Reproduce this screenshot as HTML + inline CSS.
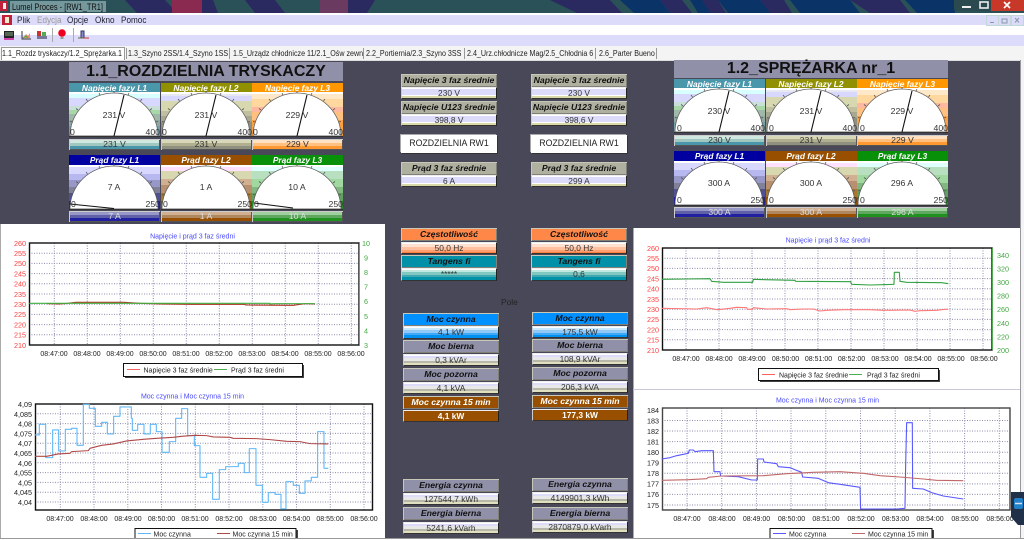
<!DOCTYPE html>
<html lang="pl"><head><meta charset="utf-8"><title>Lumel Proces</title>
<style>
html,body{margin:0;padding:0;background:#fff}
#r{position:relative;width:1024px;height:540px;overflow:hidden;font-family:"Liberation Sans",sans-serif;background:#484858;filter:blur(.35px)}
#r div,#r svg{position:absolute}
.t{left:0;top:0;width:100%;height:100%}
.m{font-size:9.5px;color:#223;top:15px;line-height:11px;transform:scaleX(.86);transform-origin:0 0}
.tab{font-size:8px;color:#222;top:47px;line-height:13px;white-space:nowrap;transform:scaleX(.89);transform-origin:0 0}
.sep{top:48px;width:1px;height:11px;background:#999}
.h,.v{width:96px;text-align:center;white-space:nowrap;box-sizing:border-box}
.h{height:13px;line-height:13px;font:italic bold 8.7px/13px "Liberation Sans",sans-serif;color:#111;background:#b0b0a0;box-shadow:inset 1px 1px 0 #c8c8b8,inset -1px -1px 0 #808078}
.v{height:12px;line-height:12px;font-size:8.4px;color:#333;border-left:1px solid #ccc;border-top:1px solid #eee;border-right:1px solid #222;border-bottom:1px solid #333;line-height:10px}
.vn{background:linear-gradient(#fff 0 1px,#dcdcfa 1px 7px,#fff 7px 8px,#d8d8a8 8px)}
.vg{background:linear-gradient(#fff 0 1px,#dcdcfa 1px 3px,#e8e8e8 3px 6px,#b8b8a8 6px 8px,#e0e0c0 8px)}
.vb{background:linear-gradient(#fff 0 1px,#c8e8ff 1px 3px,#90c8f8 3px 6px,#40a8f8 6px 8px,#0090f0 8px)}
.vo{background:linear-gradient(#fff 0 1px,#ffe0d0 1px 4px,#ffc0a0 4px 7px,#ffa070 7px 9px,#ff8040 9px)}
.vt{background:linear-gradient(#fff 0 1px,#c0e8e0 1px 3px,#80c8c0 3px 6px,#40a8b0 6px 8px,#0090a8 8px)}
.hg{background:#9090a8}.ho{background:#ff8848}.ht{background:#0090a8}.hb{background:#0090ff}.hr{background:#985000;color:#fff}
.vr{background:#985000;color:#fff;font-weight:bold}
.w{background:#fff;height:18px;line-height:17px;font-size:8.8px;color:#222;width:96px;text-align:center;box-shadow:1px 1px 0 #333,-1px -1px 0 #aaa}
.T{background:#9090a8;text-align:center;font-weight:bold;color:#111;font-size:16px;height:19px;line-height:19px;width:274px}
.gh{width:91px;height:10px;line-height:10px;font:italic bold 8.4px/10px "Liberation Sans",sans-serif;color:#fff;text-align:center}
.gv{width:91px;height:11px;line-height:11px;font-size:8.7px;color:#333;text-align:center;box-shadow:inset 1px 1px 0 #ccc,inset -1px -1px 0 #555}
.gi{color:#ddd}
.g{width:91px;height:45px}
.g1{background:linear-gradient(#fff 0 2px,#d8ffff 2px 6px,#d8d8ff 6px 14px,#c8e0d8 14px 18px,#a8d8a8 18px 22px,#a0b8a8 22px 28px,#90a8a0 28px 34px,#70a0a8 34px)}
.g2{background:linear-gradient(#fff 0 2px,#e8e8f0 2px 4px,#d8d8ff 4px 9px,#d8d8b0 9px 19px,#c0c0a0 19px 24px,#a8a890 24px 30px,#909080 30px)}
.g3{background:linear-gradient(#fff 0 2px,#ffe8c8 2px 7px,#ffd8a0 7px 15px,#ffb8a0 15px 20px,#ffc080 20px 28px,#ffa040 28px)}
.g4{background:linear-gradient(#fff 0 2px,#d8d8ff 2px 9px,#b8b8f0 9px 15px,#9898c8 15px 22px,#808098 22px 28px,#505098 28px 36px,#2020a0 36px)}
.g5{background:linear-gradient(#fff 0 2px,#ffe0ff 2px 6px,#d8d8b0 6px 14px,#d0b090 14px 20px,#b89070 20px 28px,#a87830 28px 36px,#985000 36px)}
.g6{background:linear-gradient(#fff 0 2px,#e0ffff 2px 6px,#b8e0c0 6px 14px,#a0d8a0 14px 22px,#80b880 22px 28px,#60a060 28px 36px,#209020 36px)}
.b1{background:linear-gradient(#e8e8f0 0 1px,#d0e8e0 1px 4px,#a0c8c0 4px 7px,#4a96aa 7px)}
.b2{background:linear-gradient(#e8e8f0 0 1px,#d8d8b8 1px 4px,#b0b090 4px 7px,#909080 7px)}
.b3{background:linear-gradient(#fff 0 1px,#ffe0c0 1px 4px,#ffc080 4px 7px,#ff9830 7px)}
.b4{background:linear-gradient(#d8d8f0 0 1px,#9898c8 1px 4px,#6060a8 4px 7px,#2020a0 7px)}
.b5{background:linear-gradient(#f0e8e0 0 1px,#d0b090 1px 4px,#b08860 4px 7px,#985000 7px)}
.b6{background:linear-gradient(#e8f0e8 0 1px,#a0d0a0 1px 4px,#60a860 4px 7px,#209020 7px)}
text{font-family:"Liberation Sans",sans-serif}
.gt{font-size:8.7px;fill:#333}
.ct{font-size:7px;fill:#4a4aff;text-anchor:middle}
.tm{font-size:7px;fill:#222;text-anchor:middle}
.yr{font-size:7.2px;fill:#ff4040;text-anchor:end}
.yk{font-size:7.2px;fill:#222;text-anchor:end}
.yg{font-size:7.2px;fill:#40a840}
.lg{font-size:7px;fill:#222}
.gr{fill:none;stroke:#8c8cac;stroke-width:1;stroke-dasharray:1 1.5}
.px{fill:none;stroke:#111;stroke-width:1.4}
.ln{fill:none;stroke-width:3.3;stroke-linejoin:round}
</style></head><body><div id="r">

<!-- title bar -->
<svg class="t" style="width:1024px;height:13px" viewBox="0 0 1024 13">
<rect width="1024" height="13" fill="#2a5058"/>
<path d="M125 0h40l12 13h-40zM195 0h18l5 13h-16zM245 0h30l10 13h-30zM345 0h30l-8 13h-30zM550 0h60l12 13h-45zM660 0h22l10 13h-22zM700 0h18l8 13h-20zM760 0h24l8 13h-24zM850 0h50l10 13h-40z" fill="#2a2a60"/>
<path d="M620 0h40l10 13h-36zM690 0h12l8 13h-12zM718 0h42l10 13h-42zM790 0h60l10 13h-60zM905 0h50v13h-38z" fill="#0a3468"/>
<rect x="172" y="0" width="30" height="13" fill="#8a2a50"/><rect x="320" y="0" width="28" height="13" fill="#6a3a60"/>
<rect x="10" y="1" width="96" height="11" fill="#8fb0b4" opacity=".75"/>
<path d="M954 0h37v8q-1 3-3 3h-32q-2 0-2-3z" fill="#2a4a50"/><path d="M991 0h33v11h-33z" fill="#c83828"/>
<rect x="962" y="6" width="9" height="2" fill="#eee"/><rect x="980" y="2" width="8" height="6" fill="none" stroke="#eee" stroke-width="1.6"/>
<path d="M1004 2l6 6M1010 2l-6 6" stroke="#fff" stroke-width="1.7"/>
<rect x="0" y="1" width="8" height="10" fill="#c02038"/><rect x="3" y="3" width="3" height="6" fill="#eee"/>
<text x="12" y="10" font-size="9.2" fill="#111" textLength="91" lengthAdjust="spacingAndGlyphs">Lumel Proces - [RW1_TR1]</text>
</svg>
<div style="left:0;top:13px;width:1024px;height:2px;background:#fff"></div>
<div style="left:0;top:15px;width:1024px;height:10px;background:#dcdcfa"></div>
<div style="left:0;top:25px;width:1024px;height:10px;background:#fff"></div>
<div style="left:0;top:35px;width:1024px;height:11px;background:#dcdcfa"></div>
<div style="left:0;top:46px;width:1024px;height:14px;background:#f4f4f4"></div>

<!-- menu -->
<div style="left:2px;top:15px;width:10px;height:10px;background:#c02038"></div>
<div style="left:5px;top:17px;width:4px;height:6px;background:#eec"></div>
<div class="m" style="left:17px">Plik</div>
<div class="m" style="left:37px;color:#999">Edycja</div>
<div class="m" style="left:67px">Opcje</div>
<div class="m" style="left:95px">Okno</div>
<div class="m" style="left:121px">Pomoc</div>
<svg class="t" style="width:1024px;height:46px" viewBox="0 0 1024 46">
<g fill="#dcdcfa" stroke="#c0d8d8"><rect x="986.500" y="15.500" width="12" height="10"/><rect x="998.500" y="15.500" width="12" height="10"/><rect x="1011.500" y="15.500" width="12" height="10"/></g>
<path d="M990 22.500h4" stroke="#8899aa"/><path d="M1002 19h5v4h-5z" fill="none" stroke="#8899aa"/><path d="M1015 18l4 4.500M1019 18l-4 4.500" stroke="#8899aa"/>
<!-- toolbar icons -->
<rect x="4" y="31" width="10" height="8" fill="#222"/><path d="M5 33h8M5 35h8" stroke="#8a8"/><rect x="4" y="38" width="10" height="2" fill="#c4a"/>
<path d="M22 31v8h9" stroke="#333" fill="none"/><path d="M23 38l3-4 2 2 2-3v5z" fill="#e86"/><path d="M23 38l3-2 2 2" stroke="#4a4" fill="none"/>
<rect x="37" y="31" width="4" height="5" fill="#c33"/><rect x="42" y="32" width="4" height="4" fill="#5a5"/><rect x="37" y="36" width="10" height="3" fill="#779"/>
<line x1="52.500" y1="28" x2="52.500" y2="42" stroke="#aaa"/>
<circle cx="62" cy="33" r="3.800" fill="#f00020"/><rect x="60.500" y="37" width="3" height="2" fill="#999"/>
<line x1="73.500" y1="28" x2="73.500" y2="42" stroke="#aaa"/>
<path d="M81 38v-7h3v7" fill="#88c" stroke="#336"/><path d="M78 38h11" stroke="#664"/><path d="M84 38h5" stroke="#c33"/>
</svg>

<!-- tabs -->
<div style="left:1px;top:47px;width:124px;height:13px;background:#fff;border:1px solid #999;border-bottom:0;box-sizing:border-box"></div>
<div class="tab" style="left:2px">1.1_Rozdz tryskaczy/1.2_Sprężarka.1</div>
<div class="sep" style="left:126px"></div>
<div class="tab" style="left:128px">1.3_Szyno 2SS/1.4_Szyno 1SS</div>
<div class="sep" style="left:229px"></div>
<div class="tab" style="left:233px">1.5_Urządz chłodnicze 11/2.1_Ośw zewn</div>
<div class="sep" style="left:363px"></div>
<div class="tab" style="left:366px">2.2_Portiernia/2.3_Szyno 3SS</div>
<div class="sep" style="left:464px"></div>
<div class="tab" style="left:467px">2.4_Urz.chłodnicze Mag/2.5_Chłodnia 6</div>
<div class="sep" style="left:595px"></div>
<div class="tab" style="left:599px">2.6_Parter Bueno</div>
<div class="sep" style="left:656px"></div>
<div style="left:0;top:60px;width:1024px;height:1px;background:#ddd"></div>
<div style="left:1020px;top:60px;width:4px;height:480px;background:#f4f4f8;border-left:1px solid #999;box-sizing:border-box"></div>

<!-- dome symbols -->
<svg style="width:0;height:0"><defs>
<g id="d"><path d="M1 44A44 43 0 0 1 89 44Z" fill="#fff" stroke="#555" stroke-width=".7"/><path d="M0 44.500H91" stroke="#333" stroke-width="1.200"/>
<path d="M45 1v-2M31 3l-1-2M18.500 9l-1.500-2M9 18l-2-1.500M3 30l-2-.6M59 3l1-2M71.500 9l1.500-2M81 18l2-1.500M87 30l2-.6" stroke="#555" stroke-width=".8"/></g>
</defs></svg>

<!-- LEFT gauges -->
<div class="T" style="left:69px;top:62px">1.1_ROZDZIELNIA TRYSKACZY</div>
<div class="gh" style="left:69px;top:83px;background:#4a96aa">Napięcie fazy L1</div>
<div class="gh" style="left:160.500px;top:83px;background:#909000">Napięcie fazy L2</div>
<div class="gh" style="left:252px;top:83px;background:#ff9800">Napięcie fazy L3</div>
<div class="g g1" style="left:69px;top:92px"></div><div class="g g2" style="left:160.500px;top:92px"></div><div class="g g3" style="left:252px;top:92px"></div>
<svg style="left:69px;top:92px;width:91px;height:45px;overflow:visible" viewBox="0 0 91 45"><use href="#d"/><path d="M45 44L55 3" stroke="#111" stroke-width="1.100"/><text class="gt" x="45" y="26" text-anchor="middle">231 V</text><text class="gt" x="1" y="43">0</text><text class="gt" x="91" y="43" text-anchor="end">400</text></svg>
<svg style="left:160.500px;top:92px;width:91px;height:45px;overflow:visible" viewBox="0 0 91 45"><use href="#d"/><path d="M45 44L55 3" stroke="#111" stroke-width="1.100"/><text class="gt" x="45" y="26" text-anchor="middle">231 V</text><text class="gt" x="1" y="43">0</text><text class="gt" x="91" y="43" text-anchor="end">400</text></svg>
<svg style="left:252px;top:92px;width:91px;height:45px;overflow:visible" viewBox="0 0 91 45"><use href="#d"/><path d="M45 44L55 3" stroke="#111" stroke-width="1.100"/><text class="gt" x="45" y="26" text-anchor="middle">229 V</text><text class="gt" x="1" y="43">0</text><text class="gt" x="91" y="43" text-anchor="end">400</text></svg>
<div class="gv b1" style="left:69px;top:139px">231 V</div><div class="gv b2" style="left:160.500px;top:139px">231 V</div><div class="gv b3" style="left:252px;top:139px">229 V</div>

<div class="gh" style="left:69px;top:155px;background:#0000a0">Prąd fazy L1</div>
<div class="gh" style="left:160.500px;top:155px;background:#985000">Prąd fazy L2</div>
<div class="gh" style="left:252px;top:155px;background:#089008">Prąd fazy L3</div>
<div class="g g4" style="left:69px;top:165px"></div><div class="g g5" style="left:160.500px;top:165px"></div><div class="g g6" style="left:252px;top:165px"></div>
<svg style="left:69px;top:165px;width:91px;height:45px;overflow:visible" viewBox="0 0 91 45"><use href="#d"/><path d="M45 43.500L1 39" stroke="#111" stroke-width="1.100"/><text class="gt" x="45" y="25" text-anchor="middle">7 A</text><text class="gt" x="2" y="42">0</text><text class="gt" x="91" y="42" text-anchor="end">250</text></svg>
<svg style="left:160.500px;top:165px;width:91px;height:45px;overflow:visible" viewBox="0 0 91 45"><use href="#d"/><text class="gt" x="45" y="25" text-anchor="middle">1 A</text><text class="gt" x="2" y="42">0</text><text class="gt" x="91" y="42" text-anchor="end">250</text></svg>
<svg style="left:252px;top:165px;width:91px;height:45px;overflow:visible" viewBox="0 0 91 45"><use href="#d"/><path d="M41 43L2 38" stroke="#111" stroke-width="1.100"/><text class="gt" x="45" y="25" text-anchor="middle">10 A</text><text class="gt" x="2" y="42">0</text><text class="gt" x="91" y="42" text-anchor="end">250</text></svg>
<div class="gv gi b4" style="left:69px;top:211px">7 A</div><div class="gv gi b5" style="left:160.500px;top:211px">1 A</div><div class="gv gi b6" style="left:252px;top:211px">10 A</div>

<!-- RIGHT gauges -->
<div class="T" style="left:674px;top:60px;height:18px;line-height:18px">1.2_SPRĘŻARKA nr_1</div>
<div class="gh" style="left:674px;top:79px;background:#4a96aa">Napięcie fazy L1</div>
<div class="gh" style="left:765.500px;top:79px;background:#909000">Napięcie fazy L2</div>
<div class="gh" style="left:857px;top:79px;background:#ff9800">Napięcie fazy L3</div>
<div class="g g1" style="left:674px;top:88px"></div><div class="g g2" style="left:765.500px;top:88px"></div><div class="g g3" style="left:857px;top:88px"></div>
<svg style="left:674px;top:88px;width:91px;height:45px;overflow:visible" viewBox="0 0 91 45"><use href="#d"/><path d="M45 44L55 3" stroke="#111" stroke-width="1.100"/><text class="gt" x="45" y="26" text-anchor="middle">230 V</text><text class="gt" x="3" y="43">0</text><text class="gt" x="91" y="43" text-anchor="end">400</text></svg>
<svg style="left:765.500px;top:88px;width:91px;height:45px;overflow:visible" viewBox="0 0 91 45"><use href="#d"/><path d="M45 44L55 3" stroke="#111" stroke-width="1.100"/><text class="gt" x="45" y="26" text-anchor="middle">231 V</text><text class="gt" x="3" y="43">0</text><text class="gt" x="91" y="43" text-anchor="end">400</text></svg>
<svg style="left:857px;top:88px;width:91px;height:45px;overflow:visible" viewBox="0 0 91 45"><use href="#d"/><path d="M45 44L55 3" stroke="#111" stroke-width="1.100"/><text class="gt" x="45" y="26" text-anchor="middle">229 V</text><text class="gt" x="3" y="43">0</text><text class="gt" x="91" y="43" text-anchor="end">400</text></svg>
<div class="gv b1" style="left:674px;top:134.500px">230 V</div><div class="gv b2" style="left:765.500px;top:134.500px">231 V</div><div class="gv b3" style="left:857px;top:134.500px">229 V</div>

<div class="gh" style="left:674px;top:151px;background:#0000a0">Prąd fazy L1</div>
<div class="gh" style="left:765.500px;top:151px;background:#985000">Prąd fazy L2</div>
<div class="gh" style="left:857px;top:151px;background:#089008">Prąd fazy L3</div>
<div class="g g4" style="left:674px;top:161px"></div><div class="g g5" style="left:765.500px;top:161px"></div><div class="g g6" style="left:857px;top:161px"></div>
<svg style="left:674px;top:161px;width:91px;height:45px;overflow:visible" viewBox="0 0 91 45"><use href="#d"/><text class="gt" x="45" y="25" text-anchor="middle">300 A</text><text class="gt" x="3" y="42">0</text><text class="gt" x="91" y="42" text-anchor="end">250</text></svg>
<svg style="left:765.500px;top:161px;width:91px;height:45px;overflow:visible" viewBox="0 0 91 45"><use href="#d"/><text class="gt" x="45" y="25" text-anchor="middle">300 A</text><text class="gt" x="3" y="42">0</text><text class="gt" x="91" y="42" text-anchor="end">250</text></svg>
<svg style="left:857px;top:161px;width:91px;height:45px;overflow:visible" viewBox="0 0 91 45"><use href="#d"/><text class="gt" x="45" y="25" text-anchor="middle">296 A</text><text class="gt" x="3" y="42">0</text><text class="gt" x="91" y="42" text-anchor="end">250</text></svg>
<div class="gv gi b4" style="left:674px;top:206.500px">300 A</div><div class="gv gi b5" style="left:765.500px;top:206.500px">300 A</div><div class="gv gi b6" style="left:857px;top:206.500px">296 A</div>

<!-- CENTER column 1 -->
<div class="h" style="left:401px;top:74px">Napięcie 3 faz średnie</div><div class="v vn" style="left:401px;top:87px">230 V</div>
<div class="h" style="left:401px;top:101px">Napięcie U123 średnie</div><div class="v vn" style="left:401px;top:114px">398,8 V</div>
<div class="w" style="left:401px;top:135px">ROZDZIELNIA RW1</div>
<div class="h" style="left:401px;top:162px">Prąd 3 faz średnie</div><div class="v vn" style="left:401px;top:175px">6 A</div>
<div class="h ho" style="left:401px;top:228px">Częstotliwość</div><div class="v vo" style="left:401px;top:242px">50,0 Hz</div>
<div class="h ht" style="left:401px;top:255px">Tangens fi</div><div class="v vt" style="left:401px;top:268px;height:13px">*****</div>
<!-- CENTER column 2 -->
<div class="h" style="left:531px;top:73.500px">Napięcie 3 faz średnie</div><div class="v vn" style="left:531px;top:86.500px">230 V</div>
<div class="h" style="left:531px;top:100.500px">Napięcie U123 średnie</div><div class="v vn" style="left:531px;top:113.500px">398,6 V</div>
<div class="w" style="left:531px;top:135px">ROZDZIELNIA RW1</div>
<div class="h" style="left:531px;top:161.500px">Prąd 3 faz średnie</div><div class="v vn" style="left:531px;top:174.500px">299 A</div>
<div class="h ho" style="left:531px;top:227.500px">Częstotliwość</div><div class="v vo" style="left:531px;top:241.500px">50,0 Hz</div>
<div class="h ht" style="left:531px;top:254.500px">Tangens fi</div><div class="v vt" style="left:531px;top:268px;height:13px">0,6</div>

<div style="left:501px;top:297px;font-size:8.4px;color:#222;line-height:10px">Pole</div>

<!-- Moc column 1 -->
<div class="h hb" style="left:403px;top:313px">Moc czynna</div><div class="v vb" style="left:403px;top:326px;height:13px">4,1 kW</div>
<div class="h hg" style="left:403px;top:340px">Moc bierna</div><div class="v vg" style="left:403px;top:354px">0,3 kVAr</div>
<div class="h hg" style="left:403px;top:368px">Moc pozorna</div><div class="v vg" style="left:403px;top:382px">4,1 kVA</div>
<div class="h hr" style="left:403px;top:396px">Moc czynna 15 min</div><div class="v vr" style="left:403px;top:410px">4,1 kW</div>
<div class="h hg" style="left:403px;top:479px">Energia czynna</div><div class="v vg" style="left:403px;top:493px">127544,7 kWh</div>
<div class="h hg" style="left:403px;top:507px">Energia bierna</div><div class="v vg" style="left:403px;top:522px">5241,6 kVarh</div>
<!-- Moc column 2 -->
<div class="h hb" style="left:532px;top:312px">Moc czynna</div><div class="v vb" style="left:532px;top:326px">175,5 kW</div>
<div class="h hg" style="left:532px;top:339px">Moc bierna</div><div class="v vg" style="left:532px;top:353px">108,9 kVAr</div>
<div class="h hg" style="left:532px;top:367px">Moc pozorna</div><div class="v vg" style="left:532px;top:381px">206,3 kVA</div>
<div class="h hr" style="left:532px;top:395px">Moc czynna 15 min</div><div class="v vr" style="left:532px;top:409px">177,3 kW</div>
<div class="h hg" style="left:532px;top:478px">Energia czynna</div><div class="v vg" style="left:532px;top:492px">4149901,3 kWh</div>
<div class="h hg" style="left:532px;top:507px">Energia bierna</div><div class="v vg" style="left:532px;top:521px">2870879,0 kVarh</div>

<!-- chart panels -->
<div style="left:0;top:224px;width:385px;height:316px;background:#fff;border-left:1px solid #aaa;box-sizing:border-box"></div>
<div style="left:633px;top:228px;width:387px;height:312px;background:#fff;border-left:1px solid #aab;box-sizing:border-box"></div>
<div style="left:0;top:538px;width:1024px;height:2px;background:#fff;border-top:1px solid #999;box-sizing:border-box"></div>
<div style="left:633px;top:389px;width:387px;height:1px;background:#c8c8d8"></div>

<svg class="t" viewBox="0 0 1024 540">
<!-- CHART 1 -->
<text class="ct" x="192.500" y="238.500">Napięcie i prąd 3 faz średni</text>
<path class="gr" d="M29 253.200H359M29 263.400H359M29 273.600H359M29 283.800H359M29 294H359M29 304.200H359M29 314.400H359M29 324.600H359M29 334.800H359M54.300 243V345M87.300 243V345M120.300 243V345M153.300 243V345M186.300 243V345M219.300 243V345M252.300 243V345M285.300 243V345M318.300 243V345M351.300 243V345"/>
<rect class="px" x="29.500" y="243" width="329.500" height="102"/>
<path d="M359.500 243V345" stroke="#50b050" stroke-width="1"/>
<g transform="scale(.3333) translate(0,675)">
<polyline class="ln" stroke="#b03020" points="140,236 175,237 195,236 228,232 265,232 316,232 372,232 420,235 480,237 575,238 735,238 737,240 880,241 915,236 945,237"/>
<polyline class="ln" stroke="#40b040" points="88,235 810,235 810,237 825,236 945,236"/>
</g>
<g class="yr"><text x="26" y="246">260</text><text x="26" y="256">255</text><text x="26" y="266">250</text><text x="26" y="276.500">245</text><text x="26" y="286.500">240</text><text x="26" y="297">235</text><text x="26" y="307">230</text><text x="26" y="317">225</text><text x="26" y="327.500">220</text><text x="26" y="337.500">215</text><text x="26" y="348">210</text></g>
<g class="yg"><text x="362" y="246">10</text><text x="364" y="260.500">9</text><text x="364" y="275">8</text><text x="364" y="289.500">7</text><text x="364" y="304">6</text><text x="364" y="319">5</text><text x="364" y="333.500">4</text><text x="364" y="348">3</text></g>
<g class="tm"><text x="54" y="356">08:47:00</text><text x="87" y="356">08:48:00</text><text x="120" y="356">08:49:00</text><text x="153" y="356">08:50:00</text><text x="186" y="356">08:51:00</text><text x="219" y="356">08:52:00</text><text x="252" y="356">08:53:00</text><text x="285" y="356">08:54:00</text><text x="318" y="356">08:55:00</text><text x="351" y="356">08:56:00</text></g>
<rect x="125" y="365" width="179" height="13" fill="#444"/><rect x="123.500" y="363.500" width="179" height="13" fill="#fff" stroke="#111"/>
<path d="M127 369.500h13" stroke="#ff6060"/><path d="M214 369.500h13" stroke="#50b050"/>
<text class="lg" x="143.500" y="372.500">Napięcie 3 faz średnie</text><text class="lg" x="231" y="372.500">Prąd 3 faz średni</text>

<!-- CHART 2 -->
<text class="ct" x="192.500" y="398.500">Moc czynna i Moc czynna 15 min</text>
<path class="gr" d="M35 413.800H372M35 423.600H372M35 433.400H372M35 443.200H372M35 453H372M35 462.800H372M35 472.600H372M35 482.400H372M35 492.200H372M35 502H372M60.300 404V510M94 404V510M127.800 404V510M161.500 404V510M195.300 404V510M229 404V510M262.800 404V510M296.500 404V510M330.300 404V510M364 404V510"/>
<rect class="px" x="35.500" y="404" width="337" height="106"/>
<g transform="scale(.3333) translate(0,1155)">
<polyline class="ln" stroke="#60b8f8" points="105,150 118,150 118,118 137,118 137,218 158,218 158,135 176,135 176,198 196,198 196,133 215,133 215,130 231,130 231,181 250,181 250,58 268,58 268,70 286,70 286,124 305,124 305,112 322,112 322,147 341,147 341,94 360,94 360,66 394,66 394,100 397,100 397,136 413,136 413,118 432,118 432,147 451,147 451,118 469,118 469,140 486,140 486,202 508,202 508,170 527,170 527,100 545,100 545,71 563,71 563,152 583,152 583,182 600,182 600,277 620,277 620,265 638,265 638,343 658,343 658,254 677,254 677,245 715,245 715,235 733,235 733,263 748,263 748,191 768,191 768,301 787,301 787,352 805,352 805,323 825,323 825,328 843,328 843,372 858,372 858,290 880,290 880,301 898,301 898,325 915,325 915,288 934,288 934,277 953,277 953,140 972,140 972,250 985,250"/>
<polyline class="ln" stroke="#b04848" points="105,214 140,214 175,207 210,205 215,200 265,197 270,190 305,181 340,177 380,168 430,163 470,160 520,157 545,154 585,151 620,152 640,156 690,157 700,160 770,161 810,164 860,169 900,170 930,176 985,177"/>
</g>
<g class="yk"><text x="32" y="407">4,09</text><text x="32" y="417">4,085</text><text x="32" y="426.500">4,08</text><text x="32" y="436.500">4,075</text><text x="32" y="446">4,07</text><text x="32" y="456">4,065</text><text x="32" y="466">4,06</text><text x="32" y="475.500">4,055</text><text x="32" y="485.500">4,05</text><text x="32" y="495">4,045</text><text x="32" y="505">4,04</text></g>
<g class="tm"><text x="60" y="521">08:47:00</text><text x="94" y="521">08:48:00</text><text x="128" y="521">08:49:00</text><text x="161.500" y="521">08:50:00</text><text x="195" y="521">08:51:00</text><text x="229" y="521">08:52:00</text><text x="263" y="521">08:53:00</text><text x="296.500" y="521">08:54:00</text><text x="330" y="521">08:55:00</text><text x="364" y="521">08:56:00</text></g>
<rect x="137" y="530" width="161" height="8" fill="#444"/><path d="M135 538v-9.500h161V538" fill="#fff" stroke="#111"/>
<path d="M138 533.500h13" stroke="#60b8f8"/><path d="M217 533.500h13" stroke="#b04848"/>
<text class="lg" x="153.500" y="536.500">Moc czynna</text><text class="lg" x="232.500" y="536.500">Moc czynna 15 min</text>

<!-- CHART 3 -->
<text class="ct" x="828" y="242.500">Napięcie i prąd 3 faz średni</text>
<path class="gr" d="M662 258.200H992M662 268.400H992M662 278.600H992M662 288.800H992M662 299H992M662 309.200H992M662 319.400H992M662 329.600H992M662 339.800H992M686 248V350M719 248V350M752 248V350M785 248V350M818 248V350M851 248V350M884 248V350M917 248V350M950 248V350M983 248V350"/>
<rect class="px" x="662.500" y="248" width="329.500" height="102"/>
<path d="M992.500 248V350" stroke="#50b050"/>
<g transform="translate(630,225) scale(.3333)">
<polyline class="ln" stroke="#ff7878" points="95,250 200,252 230,248 262,254 300,250 320,247 350,248 352,253 368,253 370,248 410,252 470,251 480,254 520,252 550,252 570,258 590,256 640,254 720,254 760,256 840,255 855,259 870,257 920,256 945,253 955,253"/>
<polyline class="ln" stroke="#30a040" points="95,163 170,162 240,161 245,169 280,172 368,172 370,163 405,164 495,166 497,169 662,170 665,178 720,180 792,178 793,142 808,142 810,169 830,172 935,173 955,176"/>
</g>
<g class="yr"><text x="659" y="251">260</text><text x="659" y="261">255</text><text x="659" y="271">250</text><text x="659" y="281.500">245</text><text x="659" y="291.500">240</text><text x="659" y="302">235</text><text x="659" y="312">230</text><text x="659" y="322">225</text><text x="659" y="332.500">220</text><text x="659" y="342.500">215</text><text x="659" y="353">210</text></g>
<g class="yg"><text x="997" y="258">340</text><text x="997" y="271.500">320</text><text x="997" y="285">300</text><text x="997" y="298.500">280</text><text x="997" y="312">260</text><text x="997" y="326">240</text><text x="997" y="339.500">220</text><text x="997" y="353">200</text></g>
<g class="tm"><text x="686" y="361">08:47:00</text><text x="719" y="361">08:48:00</text><text x="752" y="361">08:49:00</text><text x="785.500" y="361">08:50:00</text><text x="818.500" y="361">08:51:00</text><text x="851.500" y="361">08:52:00</text><text x="885" y="361">08:53:00</text><text x="918" y="361">08:54:00</text><text x="951" y="361">08:55:00</text><text x="984" y="361">08:56:00</text></g>
<rect x="760" y="370" width="180" height="12" fill="#444"/><rect x="758.500" y="368.500" width="180" height="12" fill="#fff" stroke="#111"/>
<path d="M762 374.500h13" stroke="#ff6060"/><path d="M849 374.500h13" stroke="#50b050"/>
<text class="lg" x="779" y="377.500">Napięcie 3 faz średnie</text><text class="lg" x="867" y="377.500">Prąd 3 faz średni</text>

<!-- CHART 4 -->
<text class="ct" x="827.500" y="402.500">Moc czynna i Moc czynna 15 min</text>
<path class="gr" d="M662 420.500H1010M662 431H1010M662 441.600H1010M662 452.200H1010M662 462.700H1010M662 473.300H1010M662 483.900H1010M662 494.400H1010M662 505H1010M687 408V510M721.700 408V510M756.400 408V510M791 408V510M825.800 408V510M860.500 408V510M895.200 408V510M929.900 408V510M964.600 408V510M999.300 408V510"/>
<rect class="px" x="662.500" y="408" width="347.500" height="102" style="stroke:#444"/>
<g transform="translate(630,385) scale(.3333)">
<polyline class="ln" stroke="#5858ff" points="95,222 120,218 140,212 175,205 178,195 190,195 195,200 215,197 250,197 252,260 270,260 272,273 325,275 365,285 382,285 383,222 400,222 402,231 440,236 445,245 480,248 497,255 515,262 518,276 565,280 595,293 630,298 690,307 692,372 735,372 800,372 825,370 827,243 830,113 847,113 848,310 880,312 905,323 940,333 1000,342"/>
<polyline class="ln" stroke="#c06868" points="95,286 175,284 230,281 235,277 275,273 400,272 470,266 550,262 630,260 700,265 750,272 810,276 880,282 920,286 1000,287"/>
</g>
<g class="yk"><text x="659" y="413">184</text><text x="659" y="423.500">183</text><text x="659" y="434">182</text><text x="659" y="444.500">181</text><text x="659" y="455">180</text><text x="659" y="465.500">179</text><text x="659" y="476">178</text><text x="659" y="486.500">177</text><text x="659" y="497">176</text><text x="659" y="508">175</text></g>
<g class="tm"><text x="687" y="521">08:47:00</text><text x="722" y="521">08:48:00</text><text x="756.500" y="521">08:49:00</text><text x="791.500" y="521">08:50:00</text><text x="826" y="521">08:51:00</text><text x="861" y="521">08:52:00</text><text x="895.500" y="521">08:53:00</text><text x="930" y="521">08:54:00</text><text x="965" y="521">08:55:00</text><text x="1000" y="521">08:56:00</text></g>
<rect x="772" y="530" width="162" height="8" fill="#444"/><path d="M770 538v-9.500h162V538" fill="#fff" stroke="#111"/>
<path d="M773 533.500h13" stroke="#5858ff"/><path d="M852 533.500h13" stroke="#c06868"/>
<text class="lg" x="789" y="536.500">Moc czynna</text><text class="lg" x="868" y="536.500">Moc czynna 15 min</text>

<!-- TeamViewer tab -->
<path d="M1011 492h13v33h-6l-7-8z" fill="#203048"/>
<rect x="1014" y="498" width="9" height="11" rx="2" fill="#2080c8"/><path d="M1015 503.500h7" stroke="#dde" stroke-width="1.500"/>
</svg>
</div></body></html>
